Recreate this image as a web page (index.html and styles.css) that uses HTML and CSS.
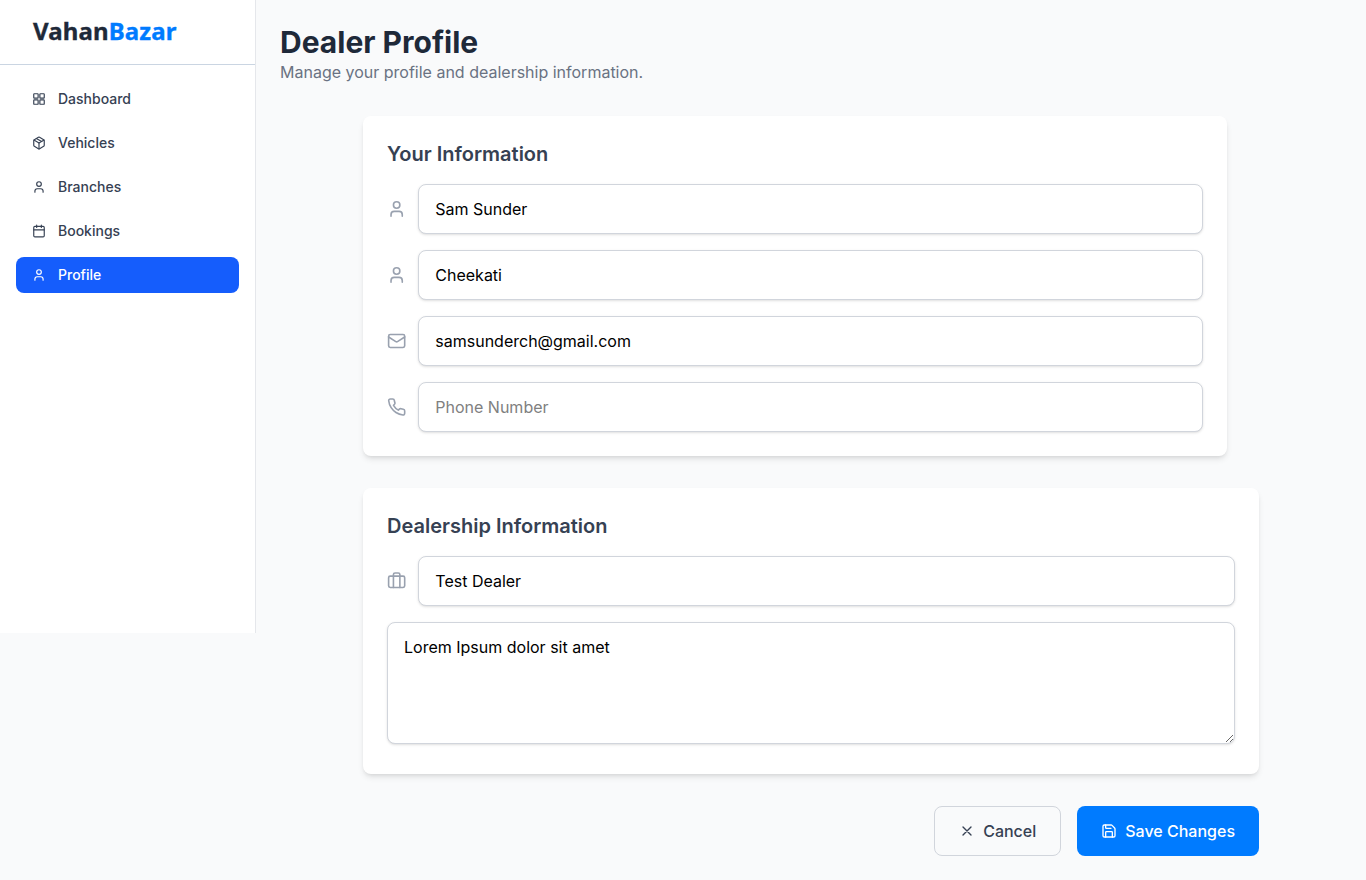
FILE: index.html
```html
<!DOCTYPE html>
<html lang="en">
<head>
<meta charset="utf-8">
<title>Dealer Profile</title>
<link rel="stylesheet" href="styles.css">
</head>
<body>
<svg class="sprite" aria-hidden="true">
  <symbol id="user" viewBox="0 0 24 24"><path d="M19 21v-2a4 4 0 0 0-4-4H9a4 4 0 0 0-4 4v2"/><circle cx="12" cy="7" r="4"/></symbol>
  <symbol id="grid" viewBox="0 0 24 24"><rect x="3" y="3" width="7.5" height="7.5" rx="1"/><rect x="13.5" y="3" width="7.5" height="7.5" rx="1"/><rect x="13.5" y="13.5" width="7.5" height="7.5" rx="1"/><rect x="3" y="13.5" width="7.5" height="7.5" rx="1"/></symbol>
  <symbol id="package" viewBox="0 0 24 24"><path d="M11 21.73a2 2 0 0 0 2 0l7-4A2 2 0 0 0 21 16V8a2 2 0 0 0-1-1.73l-7-4a2 2 0 0 0-2 0l-7 4A2 2 0 0 0 3 8v8a2 2 0 0 0 1 1.73z"/><path d="M12 22V12"/><path d="M3.29 7 12 12l8.71-5"/><path d="m7.5 4.27 9 5.15"/></symbol>
  <symbol id="calendar" viewBox="0 0 24 24"><path d="M8 2v4M16 2v4"/><rect x="3" y="4" width="18" height="18" rx="2"/><path d="M3 10h18"/></symbol>
  <symbol id="mail" viewBox="0 0 24 24"><rect x="2" y="4" width="20" height="16" rx="2"/><path d="m22 7-8.97 5.7a1.94 1.94 0 0 1-2.06 0L2 7"/></symbol>
  <symbol id="phone" viewBox="0 0 24 24"><path d="M22 16.92v3a2 2 0 0 1-2.18 2 19.79 19.79 0 0 1-8.63-3.07 19.5 19.5 0 0 1-6-6 19.79 19.79 0 0 1-3.07-8.67A2 2 0 0 1 4.11 2h3a2 2 0 0 1 2 1.72 12.84 12.84 0 0 0 .7 2.81 2 2 0 0 1-.45 2.11L8.09 9.91a16 16 0 0 0 6 6l1.27-1.27a2 2 0 0 1 2.11-.45 12.84 12.84 0 0 0 2.81.7A2 2 0 0 1 22 16.92z"/></symbol>
  <symbol id="briefcase" viewBox="0 0 24 24"><rect x="2" y="6" width="20" height="14" rx="2"/><path d="M16 20V4a2 2 0 0 0-2-2h-4a2 2 0 0 0-2 2v16"/></symbol>
  <symbol id="x" viewBox="0 0 24 24"><path d="M18 6 6 18M6 6l12 12"/></symbol>
  <symbol id="save" viewBox="0 0 24 24"><path d="M15.2 3a2 2 0 0 1 1.4.6l3.8 3.8a2 2 0 0 1 .6 1.4V19a2 2 0 0 1-2 2H5a2 2 0 0 1-2-2V5a2 2 0 0 1 2-2z"/><path d="M17 21v-7a1 1 0 0 0-1-1H8a1 1 0 0 0-1 1v7"/><path d="M7 3v4a1 1 0 0 0 1 1h7"/></symbol>
</svg>
<div class="layout">
  <aside class="sidebar">
    <div class="brand"><span>Vahan<span class="brand-accent">Bazar</span></span></div>
    <nav class="nav">
      <a class="nav-item"><svg class="icon"><use href="#grid"/></svg>Dashboard</a>
      <a class="nav-item"><svg class="icon"><use href="#package"/></svg>Vehicles</a>
      <a class="nav-item"><svg class="icon"><use href="#user"/></svg>Branches</a>
      <a class="nav-item"><svg class="icon"><use href="#calendar"/></svg>Bookings</a>
      <a class="nav-item active"><svg class="icon"><use href="#user"/></svg>Profile</a>
    </nav>
  </aside>
  <main class="main">
    <h1 class="title">Dealer Profile</h1>
    <p class="subtitle">Manage your profile and dealership information.</p>
    <form class="form">
      <section class="card personal">
        <h2 class="card-title">Your Information</h2>
        <div class="field"><svg class="icon"><use href="#user"/></svg><input class="input" type="text" value="Sam Sunder"></div>
        <div class="field"><svg class="icon"><use href="#user"/></svg><input class="input" type="text" value="Cheekati"></div>
        <div class="field"><svg class="icon"><use href="#mail"/></svg><input class="input" type="text" value="samsunderch@gmail.com"></div>
        <div class="field"><svg class="icon"><use href="#phone"/></svg><input class="input" type="text" placeholder="Phone Number"></div>
      </section>
      <section class="card dealership">
        <h2 class="card-title">Dealership Information</h2>
        <div class="field"><svg class="icon"><use href="#briefcase"/></svg><input class="input" type="text" value="Test Dealer"></div>
        <textarea class="input area" spellcheck="false">Lorem Ipsum dolor sit amet</textarea>
      </section>
      <div class="actions">
        <button class="btn cancel" type="button"><svg class="icon"><use href="#x"/></svg>Cancel</button>
        <button class="btn save" type="button"><svg class="icon"><use href="#save"/></svg>Save Changes</button>
      </div>
    </form>
  </main>
</div>
</body>
</html>
```

FILE: styles.css
```css
* { box-sizing: border-box; }
body {
  margin: 0;
  min-height: 880px;
  background: #f9fafb;
  font-family: Inter, "Liberation Sans", sans-serif;
  font-size: 16px;
  line-height: 24px;
  color: #1e2939;
}
h1, h2, p { margin: 0; }
.sprite { display: none; }
.icon {
  flex: none;
  fill: none;
  stroke: currentColor;
  stroke-width: 2;
  stroke-linecap: round;
  stroke-linejoin: round;
}
.layout { display: flex; align-items: flex-start; }
.sidebar {
  flex: none;
  width: 256px;
  height: 633px;
  background: #fff;
  border-right: 1px solid #e5e7eb;
}
.brand {
  display: flex;
  align-items: center;
  height: 65px;
  padding: 0 32px 2px 33px;
  border-bottom: 1px solid #cad5e2;
  font-family: "Noto Sans", sans-serif;
  font-size: 24px;
  font-weight: 700;
  line-height: 32px;
  letter-spacing: 0.12px;
  -webkit-text-stroke: 0.35px currentColor;
}
.brand-accent { color: #007bff; }
.nav { display: flex; flex-direction: column; gap: 8px; padding: 16px; }
.nav-item {
  display: flex;
  align-items: center;
  gap: 12px;
  height: 36px;
  padding: 0 16px;
  border-radius: 8px;
  color: #364153;
  font-size: 14px;
  font-weight: 500;
  line-height: 20px;
}
.nav-item .icon { width: 14px; height: 14px; }
.nav-item.active { background: #155dfc; color: #fff; }
.main { flex: 1; padding: 24px; }
.title { font-size: 30px; font-weight: 700; line-height: 36px; }
.subtitle { color: #6a7282; }
.form {
  display: flex;
  flex-direction: column;
  gap: 32px;
  width: 896px;
  margin: 32px auto 0;
}
.card {
  display: flex;
  flex-direction: column;
  gap: 16px;
  padding: 24px;
  border-radius: 8px;
  background: #fff;
  box-shadow: 0 4px 6px -1px rgba(0, 0, 0, .1), 0 2px 4px -2px rgba(0, 0, 0, .1);
}
.personal { margin-right: 32px; }
.dealership { padding-bottom: 30px; }
.card-title { color: #364153; font-size: 20px; font-weight: 600; line-height: 28px; }
.field { display: flex; align-items: center; gap: 12px; }
.field .icon { width: 19.3px; height: 20px; color: #99a1af; }
.input {
  flex: 1;
  min-width: 0;
  height: 50px;
  margin: 0;
  padding: 12px 16px;
  border: 1px solid #d1d5dc;
  border-radius: 8px;
  background: #fff;
  color: #000;
  font: inherit;
  box-shadow: 0 1px 3px rgba(0, 0, 0, .1), 0 1px 2px -1px rgba(0, 0, 0, .1);
}
.input::placeholder { color: #808080; }
.area { flex: none; height: 122px; resize: vertical; }
.actions { display: flex; justify-content: flex-end; gap: 16px; }
.btn {
  display: flex;
  align-items: center;
  gap: 8px;
  height: 50px;
  padding: 0 24px;
  border: 0;
  border-radius: 8px;
  font: inherit;
  font-weight: 500;
}
.btn .icon { width: 16px; height: 16px; }
.cancel { border: 1px solid #d1d5dc; background: transparent; color: #364153; }
.save { background: #007bff; color: #fff; }
```
